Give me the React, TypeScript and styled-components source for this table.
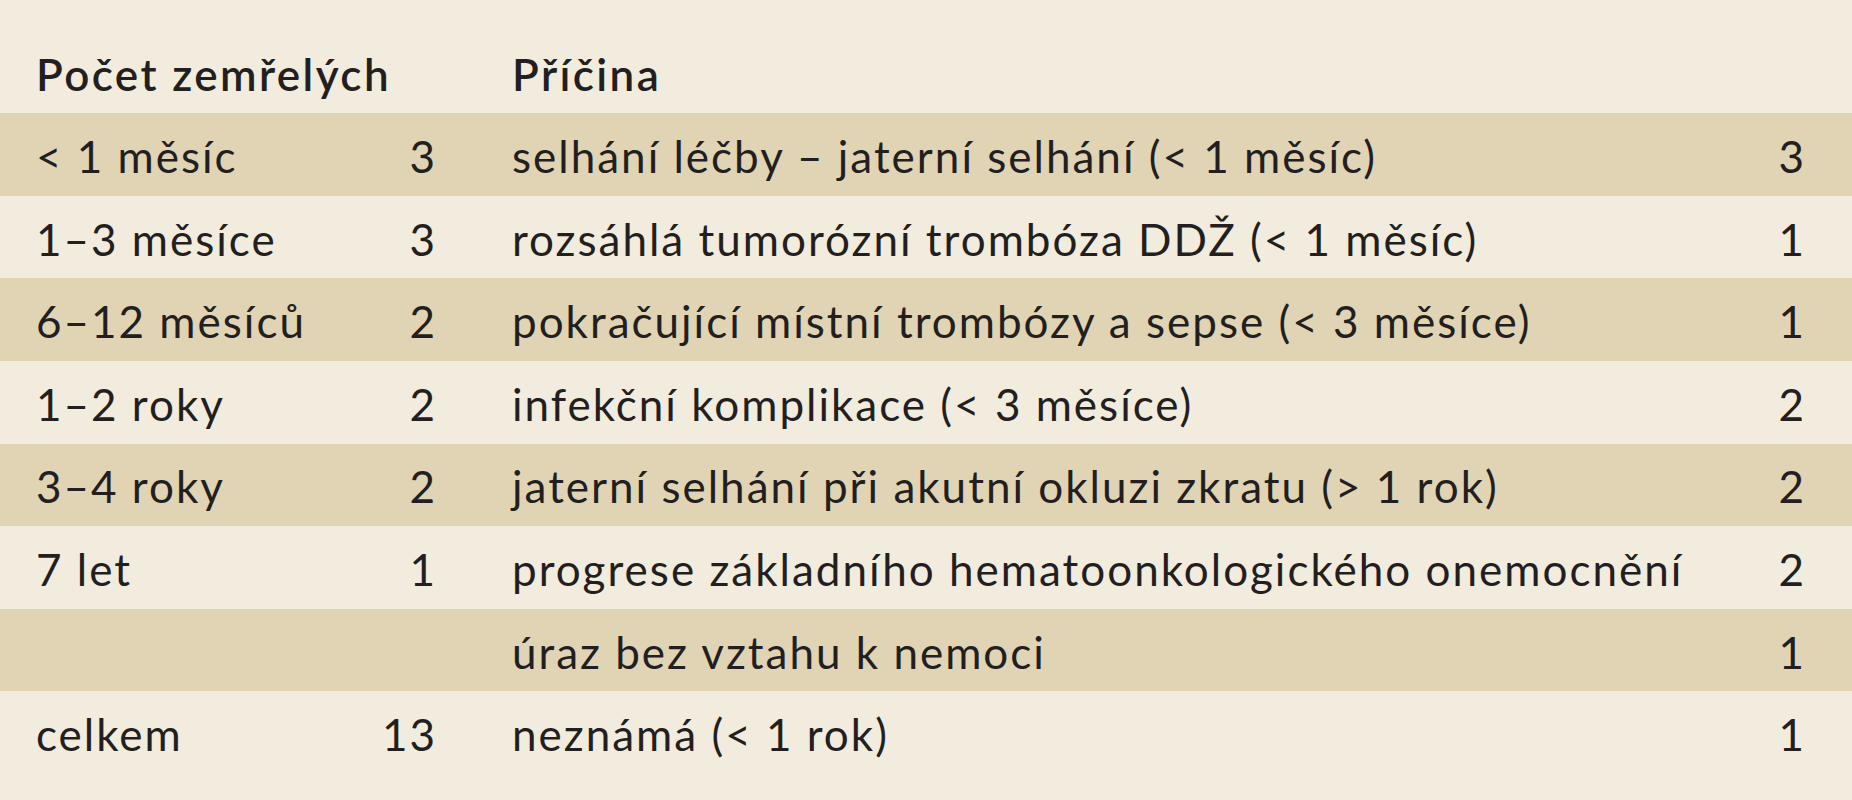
import React from "react";
import styled, { createGlobalStyle } from "styled-components";

const Global = createGlobalStyle`
  html, body {
    margin: 0;
    padding: 0;
    background: #f1ecdd;
  }
  body {
    font-family: Lato, "Open Sans", "DejaVu Sans", sans-serif;
    color: #231f20;
  }
`;

const Page = styled.div`
  width: 1852px;
  height: 800px;
  background: #f1ecdd;
  display: flex;
  flex-direction: column;
`;

const Row = styled.div<{ $shaded?: boolean; $header?: boolean }>`
  display: grid;
  grid-template-columns: 340px 59px 1fr 60px;
  padding: ${(p) => (p.$header ? "0 48px 12px 36px" : "4px 48px 0 36px")};
  height: ${(p) => (p.$header ? "113px" : "82.625px")};
  box-sizing: border-box;
  align-items: ${(p) => (p.$header ? "end" : "center")};
  background: ${(p) => (p.$shaded ? "#e0d4b4" : "transparent")};
  font-size: 44px;
  font-weight: ${(p) => (p.$header ? 600 : 400)};
  letter-spacing: ${(p) => (p.$header ? "2.4px" : "2px")};
  line-height: 1.2;
  white-space: nowrap;
`;

const Label = styled.span``;

const Num = styled.span`
  text-align: right;
  margin-right: -2px;
`;

const Cause = styled.span`
  padding-left: 77px;
`;

type R = { period: string; count: string; cause: string; n: string };

const rows: R[] = [
  { period: "< 1 měsíc", count: "3", cause: "selhání léčby – jaterní selhání (< 1 měsíc)", n: "3" },
  { period: "1–3 měsíce", count: "3", cause: "rozsáhlá tumorózní trombóza DDŽ (< 1 měsíc)", n: "1" },
  { period: "6–12 měsíců", count: "2", cause: "pokračující místní trombózy a sepse (< 3 měsíce)", n: "1" },
  { period: "1–2 roky", count: "2", cause: "infekční komplikace (< 3 měsíce)", n: "2" },
  { period: "3–4 roky", count: "2", cause: "jaterní selhání při akutní okluzi zkratu (> 1 rok)", n: "2" },
  { period: "7 let", count: "1", cause: "progrese základního hematoonkologického onemocnění", n: "2" },
  { period: "", count: "", cause: "úraz bez vztahu k nemoci", n: "1" },
  { period: "celkem", count: "13", cause: "neznámá (< 1 rok)", n: "1" },
];

export default function App() {
  return (
    <Page>
      <Global />
      <Row $header>
        <Label>Počet zemřelých</Label>
        <Num />
        <Cause>Příčina</Cause>
        <Num />
      </Row>
      {rows.map((r, i) => (
        <Row key={i} $shaded={i % 2 === 0}>
          <Label>{r.period}</Label>
          <Num>{r.count}</Num>
          <Cause>{r.cause}</Cause>
          <Num>{r.n}</Num>
        </Row>
      ))}
    </Page>
  );
}
